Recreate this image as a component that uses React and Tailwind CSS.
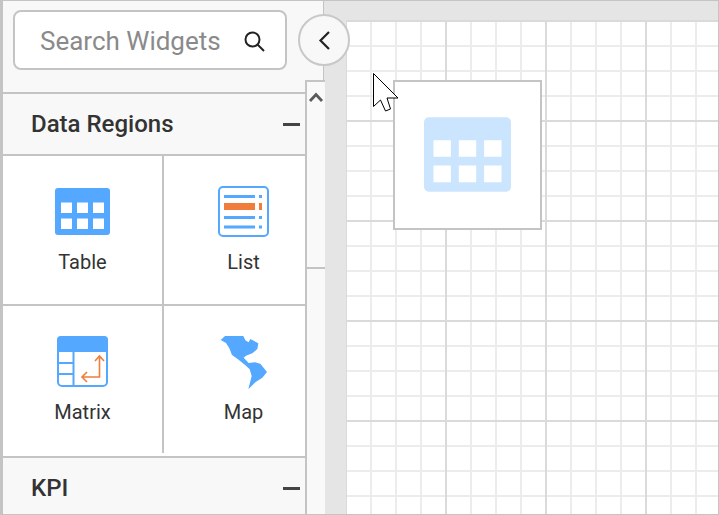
const TableIcon = ({ className, fill }) => (
  <svg className={className} viewBox="0 0 55 47" aria-hidden="true">
    <path
      fillRule="evenodd"
      fill={fill}
      d="M3 0H52A3 3 0 0 1 55 3V44A3 3 0 0 1 52 47H3A3 3 0 0 1 0 44V3A3 3 0 0 1 3 0ZM6 14.500V25H17V14.500ZM22 14.500V25H33V14.500ZM38 14.500V25H49V14.500ZM6 30.500V41H17V30.500ZM22 30.500V41H33V30.500ZM38 30.500V41H49V30.500Z"
    />
  </svg>
);

const ListIcon = () => (
  <svg className="w-[51px] h-[51px]" viewBox="0 0 51 51" aria-hidden="true">
    <rect x="1" y="1" width="49" height="49" rx="4" fill="#fff" stroke="#54a8ff" strokeWidth="2" />
    <rect x="6" y="9" width="31" height="3" fill="#54a8ff" />
    <rect x="41" y="9" width="3" height="3" fill="#54a8ff" />
    <rect x="6" y="17" width="31" height="7" fill="#f07d3c" />
    <rect x="41" y="17" width="3" height="7" fill="#f07d3c" />
    <rect x="6" y="30" width="31" height="3" fill="#54a8ff" />
    <rect x="41" y="30" width="3" height="3" fill="#54a8ff" />
    <rect x="6" y="39.500" width="31" height="3" fill="#54a8ff" />
    <rect x="41" y="39.500" width="3" height="3" fill="#54a8ff" />
  </svg>
);

const MatrixIcon = () => (
  <svg className="w-[51px] h-[51px]" viewBox="0 0 51 51" aria-hidden="true">
    <rect x="1" y="1" width="49" height="49" rx="4" fill="#fff" stroke="#54a8ff" strokeWidth="2" />
    <path d="M4 0H47A4 4 0 0 1 51 4V16H0V4A4 4 0 0 1 4 0Z" fill="#54a8ff" />
    <path d="M16.500 16V50M1 27H16.500M1 38H16.500" fill="none" stroke="#54a8ff" strokeWidth="2" />
    <path
      d="M42.500 20V41H25M38 25L42.500 20L47 25M30 36L25 41L30 46"
      fill="none"
      stroke="#f07d3c"
      strokeWidth="1.600"
    />
  </svg>
);

const MapIcon = () => (
  <svg className="w-[48px] h-[56px] self-start" viewBox="660 47 144 168" aria-hidden="true">
    <path
      fill="#54a8ff"
      d="M662 59L675 47H730L736 60L746 66L751 56L775 69L772 86L757 99L738 106L731 112L746 128L765 126L781 130L801 155L787 172L766 186L745 207L755 167L749 147L738 136L714 117L696 104L688 84L678 68Z"
    />
  </svg>
);

const Cell = ({ label, children, className = "" }) => (
  <div className={`flex flex-col items-center ${className}`}>
    <div className="h-[51px] flex items-center justify-center">{children}</div>
    <div className="mt-[13px] text-[20px] leading-[24px] text-[#333]">{label}</div>
  </div>
);

const SectionHeader = ({ title, className = "" }) => (
  <div className={`flex items-center justify-between bg-[#f8f8f8] pl-[28px] pr-[5px] ${className}`}>
    <span className="text-[24px] font-medium leading-[28px] text-[#333]">{title}</span>
    <span className="w-[17px] h-[3px] bg-[#444]" />
  </div>
);

export default function App() {
  return (
    <div
      className="relative flex w-[719px] h-[515px] overflow-hidden border-t border-b border-r border-l-[3px] border-[#c4c4c4] bg-[#e5e5e5]"
      style={{ fontFamily: "Roboto, sans-serif" }}
    >
      <aside className="flex w-[321px] shrink-0 border-r border-[#c4c4c4] bg-[#f8f8f8]">
        <div className="flex w-[302px] shrink-0 flex-col">
          <div className="h-[91px] shrink-0 pl-[10px] pt-[9px]">
            <div className="flex h-[60px] w-[274px] items-center justify-between rounded-[8px] border-2 border-[#c4c4c4] bg-white pl-[25px] pr-[20px] pt-[2px]">
              <span className="text-[26px] leading-[30px] text-[#8a8a8a]">Search Widgets</span>
              <svg className="w-[22px] h-[22px]" viewBox="0 0 22 22" fill="none" stroke="#222" strokeWidth="2" aria-hidden="true">
                <circle cx="9.500" cy="9.500" r="7" />
                <path d="M14.500 14.500L21 21" />
              </svg>
            </div>
          </div>
          <SectionHeader title="Data Regions" className="h-[64px] shrink-0 border-y-2 border-[#c4c4c4]" />
          <div className="grid shrink-0 grid-cols-[161px_141px] bg-white">
            <Cell label="Table" className="h-[150px] border-r-2 border-b-2 border-[#c4c4c4] pt-[30px]">
              <TableIcon className="w-[55px] h-[47px]" fill="#54a8ff" />
            </Cell>
            <Cell label="List" className="h-[150px] border-b-2 border-[#c4c4c4] pl-[18px] pt-[30px]">
              <ListIcon />
            </Cell>
            <Cell label="Matrix" className="h-[147px] border-r-2 border-[#c4c4c4] pt-[30px]">
              <MatrixIcon />
            </Cell>
            <Cell label="Map" className="h-[147px] pl-[18px] pt-[30px]">
              <MapIcon />
            </Cell>
          </div>
          <div className="h-[3px] shrink-0 bg-white" />
          <SectionHeader title="KPI" className="flex-1 border-t-2 border-[#c4c4c4] pt-[4px]" />
        </div>
        <div className="mt-[79px] flex flex-1 flex-col border-l-2 border-t-2 border-[#c4c4c4] bg-[#f9f9f9]">
          <div className="h-[187px] shrink-0 border-b-2 border-[#c4c4c4] bg-[#f9f9f9]">
            <svg className="mt-[9px] w-[18px] h-[12px]" viewBox="0 0 18 12" fill="none" stroke="#5a5a5a" strokeWidth="2.800" aria-hidden="true">
              <path d="M3 10L9 3.500L15 10" />
            </svg>
          </div>
        </div>
      </aside>

      <main className="flex flex-1 flex-col pl-[22px] pt-[19px]">
        <div className="flex-1 bg-white bg-[linear-gradient(to_right,#dadada_2px,transparent_2px),linear-gradient(to_bottom,#dadada_2px,transparent_2px),linear-gradient(to_right,#ececec_2px,transparent_2px),linear-gradient(to_bottom,#ececec_2px,transparent_2px)] bg-[size:100px_100px,100px_100px,25px_25px,25px_25px] bg-[position:-1px_0]" />
      </main>

      <button className="absolute left-[295px] top-[13px] flex h-[52px] w-[52px] items-center justify-center rounded-full border-2 border-[#c8c8c8] bg-[#f8f8f8]">
        <svg className="w-[12px] h-[19px]" viewBox="0 0 12 19" fill="none" stroke="#222" strokeWidth="2.200" aria-hidden="true">
          <path d="M11 1L2.500 9.500L11 18" />
        </svg>
      </button>

      <div className="absolute left-[390px] top-[79px] flex h-[150px] w-[149px] items-center justify-center border-2 border-[#c4c4c4] bg-white pb-[1px]">
        <TableIcon className="w-[87px] h-[75px]" fill="#cbe5ff" />
      </div>

      <svg className="absolute left-[369px] top-[71px] w-[28px] h-[40px]" viewBox="0 0 28 40" aria-hidden="true">
        <path
          d="M1.500 1.500V34.500L8.500 28L13.500 39L18.500 37L15 26H26Z"
          fill="#fff"
          stroke="#000"
          strokeWidth="1"
        />
      </svg>
    </div>
  );
}
